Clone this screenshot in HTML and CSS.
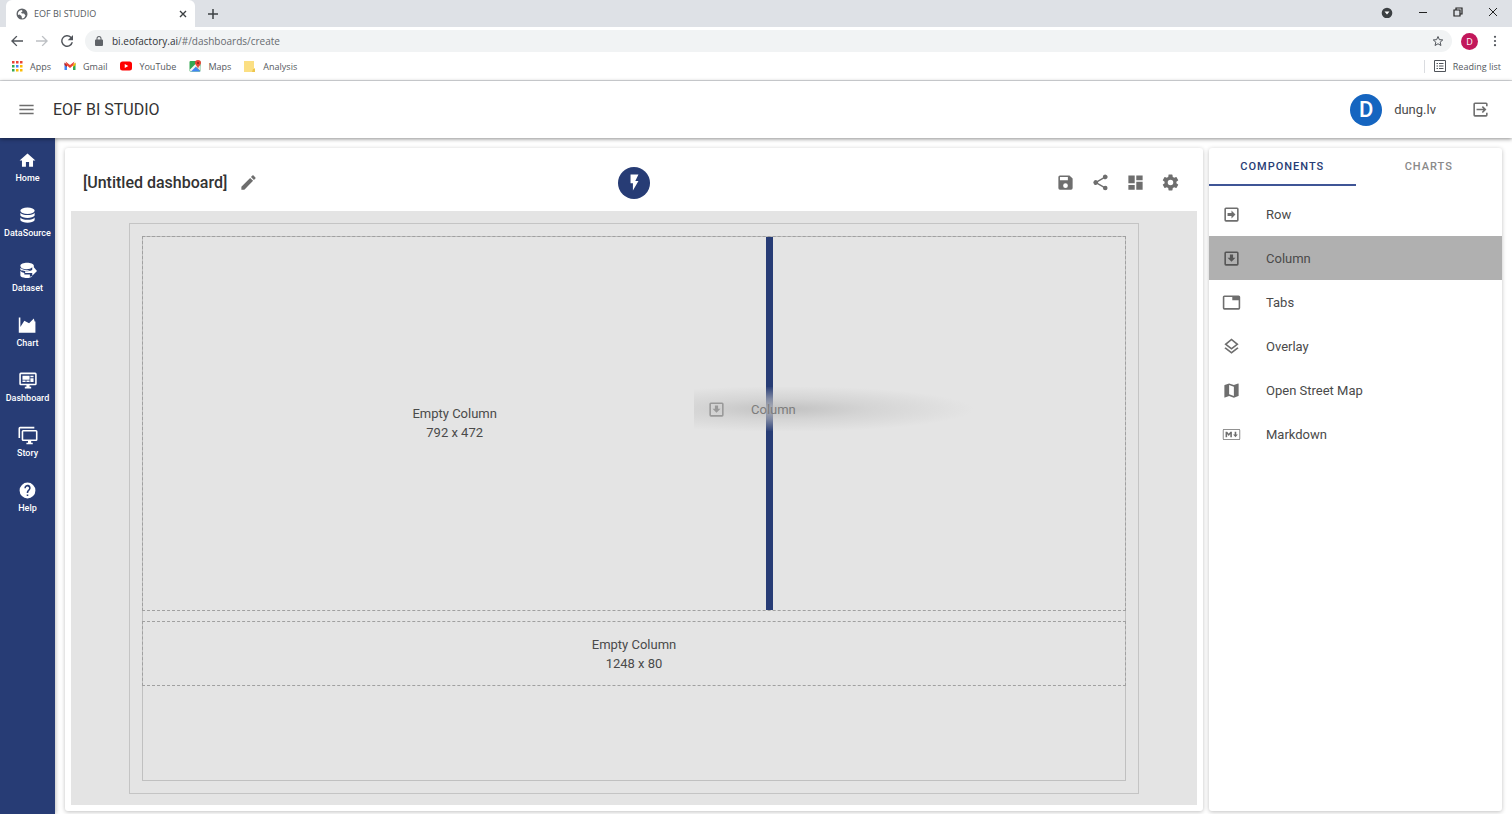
FILE: index.html
```html
<!DOCTYPE html>
<html lang="en">
<head>
<meta charset="utf-8">
<title>EOF BI STUDIO</title>
<link rel="stylesheet" href="styles.css">
</head>
<body>
<div class="browser">
  <div class="tabstrip">
    <div class="tab">
      <svg class="i12" viewBox="0 0 24 24" fill="#5f6368"><path d="M12 1a11 11 0 1 0 0 22 11 11 0 0 0 0-22zM4 14c-1-4 1-8 4-9l4-1 1 3-3 2 2 2h4l3 4-3 5-4 1-1-5-4-3z" fill-rule="evenodd"/></svg>
      <span class="tab-name">EOF BI STUDIO</span>
      <button class="plain" aria-label="Close tab"><svg class="i8" viewBox="0 0 8 8" stroke="#3c4043" stroke-width="1.4"><path d="M1 1l6 6M7 1L1 7"/></svg></button>
    </div>
    <button class="plain newtab" aria-label="New tab"><svg class="i12" viewBox="0 0 12 12" stroke="#3c4043" stroke-width="1.5"><path d="M6 1v10M1 6h10"/></svg></button>
    <div class="window-buttons">
      <button class="plain" aria-label="Search tabs"><svg class="i12" viewBox="0 0 12 12"><circle cx="6" cy="7" r="5.300" fill="#3c4043"/><path d="M3.500 5.500h5L6 8.500z" fill="#fff"/></svg></button>
      <button class="plain" aria-label="Minimize"><svg class="i10" viewBox="0 0 10 10" stroke="#222"><path d="M1 5.500h8"/></svg></button>
      <button class="plain" aria-label="Restore"><svg class="i10" viewBox="0 0 10 10" stroke="#222" stroke-width="1.200" fill="none"><path d="M1 3h6v6H1zM3 3V1h6v6H7"/></svg></button>
      <button class="plain" aria-label="Close window"><svg class="i10" viewBox="0 0 10 10" stroke="#222"><path d="M1 1l8 8M9 1L1 9"/></svg></button>
    </div>
  </div>
  <div class="toolbar">
    <div class="nav">
      <button class="plain" aria-label="Back"><svg class="i16" viewBox="0 0 24 24" fill="#50545a"><path d="M21 11H7l5.600-5.600L11 4l-8 8 8 8 1.500-1.400L7 13h14z"/></svg></button>
      <button class="plain" aria-label="Forward"><svg class="i16" viewBox="0 0 24 24" fill="#bdc0c4"><path d="M3 11h14l-5.600-5.600L13 4l8 8-8 8-1.500-1.400L17 13H3z"/></svg></button>
      <button class="plain" aria-label="Reload"><svg class="i16" viewBox="0 0 24 24" fill="#50545a"><path d="M18.500 5.500A9 9 0 1 0 21 14h-2.400a6.800 6.800 0 1 1-1.700-6.900L13 11h8V3z"/></svg></button>
    </div>
    <div class="address">
      <svg class="i12" viewBox="0 0 24 24" fill="#5f6368"><path d="M18 9h-1V7A5 5 0 0 0 7 7v2H6a2 2 0 0 0-2 2v9a2 2 0 0 0 2 2h12a2 2 0 0 0 2-2v-9a2 2 0 0 0-2-2zM9 9V7a3 3 0 0 1 6 0v2z"/></svg>
      <span class="url">bi.eofactory.ai<span class="url-path">/#/dashboards/create</span></span>
      <button class="plain star" aria-label="Bookmark"><svg class="i12" viewBox="0 0 24 24" fill="none" stroke="#50545a" stroke-width="2"><path d="M12 3l2.700 6.300 6.800.600-5.200 4.500 1.600 6.600-5.900-3.500L6.100 21l1.600-6.600L2.500 9.900l6.800-.600z"/></svg></button>
    </div>
    <button class="plain profile">D</button>
    <button class="plain kebab" aria-label="Browser menu"><svg class="i12" viewBox="0 0 12 12" fill="#50545a"><circle cx="6" cy="1.800" r="1.100"/><circle cx="6" cy="6" r="1.100"/><circle cx="6" cy="10.200" r="1.100"/></svg></button>
  </div>
  <div class="bookmarks">
    <a href="#"><svg class="i12" viewBox="0 0 12 12"><path d="M1 1h2.500v2.500H1zM5 1h2.500v2.500H5zM9 1h2.500v2.500H9z" fill="#ea4335"/><path d="M1 5h2.500v2.500H1zM1 9h2.500v2.500H1z" fill="#34a853"/><path d="M5 5h2.500v2.500H5z" fill="#4285f4"/><path d="M9 5h2.500v2.500H9zM5 9h2.500v2.500H5zM9 9h2.500v2.500H9z" fill="#fbbc05"/></svg>Apps</a>
    <a href="#"><svg class="i12" viewBox="0 0 24 24"><path d="M1 6v14h5V11z" fill="#4285f4"/><path d="M18 11v9h5V6z" fill="#34a853"/><path d="M1 5l5 4v5l-5-4z" fill="#c5221f"/><path d="M18 9l5-4v5l-5 4z" fill="#fbbc04"/><path d="M3 3l9 7 9-7-3 8-6 5-6-5z" fill="#ea4335"/></svg>Gmail</a>
    <a href="#"><svg class="i12" viewBox="0 0 24 24"><rect y="3" width="24" height="18" rx="5" fill="#f00"/><path d="M9.500 8v8l7-4z" fill="#fff"/></svg>YouTube</a>
    <a href="#"><svg class="i12" viewBox="0 0 24 24"><rect x="1" y="2" width="22" height="21" rx="2" fill="#34a853"/><path d="M3 23l10-10 10 10z" fill="#4285f4"/><path d="M1 20L18 3l3 3L4 23z" fill="#f5f5f5"/><path d="M13 13l10 9V13l-4-5z" fill="#dfe3e6"/><path d="M18 0a6 6 0 0 0-6 6c0 4 5 6 6 11 1-5 6-7 6-11a6 6 0 0 0-6-6z" fill="#ea4335"/><circle cx="18" cy="6" r="2" fill="#8c1d18"/></svg>Maps</a>
    <a href="#"><svg class="i12" viewBox="0 0 12 12"><path d="M0 1h10v7h1v4H0z" fill="#fbdf83"/><path d="M9 9h2v3H8z" fill="#edc64e"/></svg>Analysis</a>
    <a href="#" class="reading"><svg class="i12" viewBox="0 0 12 12" fill="none" stroke="#50545a"><path d="M.500.500h11v11H.500zM2.500 3.500h1.500M5 3.500h4.500M2.500 6h1.500M5 6h4.500M2.500 8.500h1.500M5 8.500h4.500"/></svg>Reading list</a>
  </div>
</div>

<header class="appbar">
  <button class="plain" aria-label="Menu"><svg class="icon" viewBox="0 0 24 24"><path d="M3 6h18v2H3zM3 11h18v2H3zM3 16h18v2H3z"/></svg></button>
  <h1>EOF BI STUDIO</h1>
  <span class="avatar">D</span>
  <span class="user">dung.lv</span>
  <button class="plain" aria-label="Log out"><svg class="icon" viewBox="0 0 24 24"><path d="M21 8V5a2 2 0 0 0-2-2H5a2 2 0 0 0-2 2v14a2 2 0 0 0 2 2h14a2 2 0 0 0 2-2v-3h-2v3H5V5h14v3zM15 7.500L13.600 9l2 2H7v2h8.600l-2 2 1.400 1.500 4.500-4.500z"/></svg></button>
</header>

<div class="app">
  <nav class="sidebar">
    <a href="#"><svg class="icon" viewBox="0 0 24 24"><path d="M10 20v-6h4v6h5v-8h3L12 3 2 12h3v8z"/></svg>Home</a>
    <a href="#"><svg class="icon" viewBox="0 0 24 24"><ellipse cx="12" cy="6" rx="9" ry="4"/><path d="M3 8.500c2 4 16 4 18 0V12c-2 4-16 4-18 0zM3 14.500c2 4 16 4 18 0V18c-2 4-16 4-18 0z"/></svg>DataSource</a>
    <a href="#"><svg class="icon" viewBox="0 0 24 24"><path d="M3 6c0-5 17-5 17 0v2l4 4.500-6 6V15H9v-2c4 0 8-.500 9-2V8c-3 4-15 3-15-2zM3 8.500c2 3 9 3.500 13 2.500-4 2-11 2-13 0zM3 12c1 2 3 2.500 5 3v2h7v3l3-1c-2 4-15 3-15-1z"/></svg>Dataset</a>
    <a href="#"><svg class="icon" viewBox="0 0 24 24"><path d="M1 2h2v12l5-8 6 3 6-6 1 4h1v14H1z"/></svg>Chart</a>
    <a href="#"><svg class="icon wide" viewBox="0 0 24 24"><path d="M21 16V4H3v12zm0-14a2 2 0 0 1 2 2v12a2 2 0 0 1-2 2h-7v2h2v2H8v-2h2v-2H3a2 2 0 0 1-2-2V4a2 2 0 0 1 2-2zM5 6h9v5H5zm10 0h4v2h-4zm4 3v5h-4V9zM5 12h4v2H5zm5 0h4v2h-4z"/></svg>Dashboard</a>
    <a href="#"><svg class="icon wide" viewBox="0 0 24 24"><path d="M22 17V7H6v10zm0-12a2 2 0 0 1 2 2v10a2 2 0 0 1-2 2h-6v2h2v2h-8v-2h2v-2H6a2 2 0 0 1-2-2V7a2 2 0 0 1 2-2zM2 3v12H0V3a2 2 0 0 1 2-2h18v2z"/></svg>Story</a>
    <a href="#"><svg class="icon" viewBox="0 0 24 24"><path d="M15.070 11.250l-.900.920C13.450 12.890 13 13.500 13 15h-2v-.500c0-1.110.450-2.110 1.170-2.830l1.240-1.260A2 2 0 1 0 10 9H8a4 4 0 1 1 7.070 2.250M13 19h-2v-2h2M12 2a10 10 0 1 0 0 20 10 10 0 0 0 0-20z"/></svg>Help</a>
  </nav>

  <main class="editor card">
    <div class="editor-bar">
      <div class="name"><h2>[Untitled dashboard]</h2>
        <button class="plain" aria-label="Rename"><svg class="icon" viewBox="0 0 24 24"><path d="M20.710 7.040c.390-.390.390-1.040 0-1.410l-2.340-2.340c-.370-.390-1.020-.390-1.410 0l-1.840 1.830 3.750 3.750M3 17.250V21h3.750L17.810 9.930l-3.750-3.750z"/></svg></button></div>
      <button class="plain flash" aria-label="Run"><svg class="icon" viewBox="0 0 24 24"><path d="M7 2v11h3v9l7-12h-4l4-8z"/></svg></button>
      <div class="actions">
        <button class="plain" aria-label="Save"><svg class="icon" viewBox="0 0 24 24"><path d="M15 9H5V5h10M12 19a3 3 0 1 1 0-6 3 3 0 0 1 0 6M17 3H5a2 2 0 0 0-2 2v14a2 2 0 0 0 2 2h14a2 2 0 0 0 2-2V7z"/></svg></button>
        <button class="plain" aria-label="Share"><svg class="icon" viewBox="0 0 24 24"><path d="M18 16.080c-.760 0-1.440.300-1.960.770L8.910 12.700c.050-.230.090-.460.090-.700s-.040-.470-.090-.700l7.050-4.110A3 3 0 1 0 15 5c0 .240.040.470.090.700L8.040 9.810a3 3 0 1 0 0 4.380l7.120 4.160c-.050.210-.080.430-.080.650a2.920 2.920 0 1 0 2.920-2.920z"/></svg></button>
        <button class="plain" aria-label="Layout"><svg class="icon" viewBox="0 0 24 24"><path d="M13 3v6h8V3M13 21h8V11h-8M3 21h8v-6H3M3 13h8V3H3z"/></svg></button>
        <button class="plain" aria-label="Settings"><svg class="icon" viewBox="0 0 24 24"><path d="M12 15.500a3.500 3.500 0 1 1 0-7 3.500 3.500 0 0 1 0 7m7.430-2.530c.040-.320.070-.640.070-.970s-.030-.660-.070-1l2.110-1.630c.190-.150.240-.420.120-.640l-2-3.460c-.120-.220-.390-.310-.610-.220l-2.490 1c-.520-.390-1.060-.730-1.690-.980l-.370-2.650A.506.506 0 0 0 14 2h-4c-.250 0-.460.180-.500.420l-.370 2.650c-.630.250-1.170.590-1.690.980l-2.490-1c-.220-.090-.490 0-.610.220l-2 3.460c-.130.220-.070.490.120.640L4.570 11c-.040.340-.070.670-.070 1s.030.650.070.970l-2.110 1.660c-.190.150-.250.420-.120.640l2 3.460c.120.220.390.300.610.220l2.490-1.010c.520.400 1.060.740 1.690.990l.370 2.650c.040.240.250.420.500.420h4c.250 0 .460-.180.500-.420l.370-2.650c.630-.260 1.170-.590 1.690-.990l2.490 1.010c.220.080.490 0 .610-.220l2-3.460c.120-.220.070-.490-.120-.640z"/></svg></button>
      </div>
    </div>
    <div class="canvas">
      <div class="page">
        <div class="page-inner">
          <section class="row split">
            <div class="cell">Empty Column<br>792 x 472</div>
            <div class="drop"></div>
            <div class="rest"></div>
            <div class="ghost"><svg class="icon" viewBox="0 0 24 24"><path d="M19 3a2 2 0 0 1 2 2v14a2 2 0 0 1-2 2H5a2 2 0 0 1-2-2V5a2 2 0 0 1 2-2zm0 16V5H5v14zM10 7h4v4h3l-5 5-5-5h3z"/></svg>Column</div>
          </section>
          <section class="row single">
            <div class="cell">Empty Column<br>1248 x 80</div>
          </section>
        </div>
      </div>
    </div>
  </main>

  <aside class="panel card">
    <div class="panel-tabs">
      <button class="plain active">COMPONENTS</button>
      <button class="plain">CHARTS</button>
    </div>
    <ul class="components">
      <li><svg class="icon" viewBox="0 0 24 24"><path d="M19 3a2 2 0 0 1 2 2v14a2 2 0 0 1-2 2H5a2 2 0 0 1-2-2V5a2 2 0 0 1 2-2zm0 16V5H5v14zM7 10h5V7l5 5-5 5v-3H7z"/></svg>Row</li>
      <li class="dragging"><svg class="icon" viewBox="0 0 24 24"><path d="M19 3a2 2 0 0 1 2 2v14a2 2 0 0 1-2 2H5a2 2 0 0 1-2-2V5a2 2 0 0 1 2-2zm0 16V5H5v14zM10 7h4v4h3l-5 5-5-5h3z"/></svg>Column</li>
      <li><svg class="icon" viewBox="0 0 24 24"><path d="M21 3H3a2 2 0 0 0-2 2v14a2 2 0 0 0 2 2h18a2 2 0 0 0 2-2V5a2 2 0 0 0-2-2m0 16H3V5h10v4h8z"/></svg>Tabs</li>
      <li><svg class="icon" viewBox="0 0 24 24"><path d="M12 18.540l7.370-5.740L21 14.070l-9 7-9-7 1.620-1.260zM12 16L3 9l9-7 9 7zm0-11.470L6.260 9 12 13.470 17.740 9z"/></svg>Overlay</li>
      <li><svg class="icon" viewBox="0 0 24 24"><path d="M15 19l-6-2.110V5l6 2.110M20.500 3h-.160L15 5.100 9 3 3.360 4.900c-.210.070-.360.250-.360.480V20.500a.500.500 0 0 0 .500.500l.160-.030L9 18.900l6 2.100 5.640-1.900c.210-.100.360-.250.360-.480V3.500a.500.500 0 0 0-.500-.500z"/></svg>Open Street Map</li>
      <li><svg class="icon" viewBox="0 0 24 24"><path d="M2.500 5h19A1.500 1.500 0 0 1 23 6.500v11a1.500 1.500 0 0 1-1.500 1.500h-19A1.500 1.500 0 0 1 1 17.500v-11A1.500 1.500 0 0 1 2.500 5zM2 6v12h20V6zM4.500 15.500v-7h2L8.500 11l2-2.500h2v7h-2v-4l-2 2.500-2-2.500v4zM16 8.500h2V12h2l-3 3.500-3-3.500h2z"/></svg>Markdown</li>
    </ul>
  </aside>
</div>
</body>
</html>
```

FILE: styles.css
```css
* { box-sizing: border-box; }

body {
  margin: 0;
  min-height: 100vh;
  display: flex;
  flex-direction: column;
  font-family: Roboto, "Liberation Sans", sans-serif;
  font-size: 13px;
  color: #4a4a4a;
  background: #fff;
}

svg { display: block; flex: none; }
h1, h2 { margin: 0; }
a { color: inherit; text-decoration: none; }

.plain {
  display: flex;
  align-items: center;
  justify-content: center;
  padding: 0;
  border: 0;
  background: none;
  font: inherit;
  color: inherit;
}

.i8 { width: 8px; height: 8px; }
.i10 { width: 10px; height: 10px; }
.i12 { width: 12px; height: 12px; }
.i16 { width: 16px; height: 16px; }

.icon {
  width: 19px;
  height: 19px;
  fill: #6e6e6e;
  fill-rule: evenodd;
}

/* Browser frame */
.browser {
  font-family: "Open Sans", "Noto Sans", sans-serif;
  font-size: 10px;
  color: #55595e;
  border-bottom: 1px solid #dcdee1;
}

.tabstrip {
  display: flex;
  align-items: center;
  height: 27px;
  padding-left: 6px;
  background: #dee1e6;
}

.tab {
  display: flex;
  align-items: center;
  gap: 6px;
  width: 189px;
  height: 27px;
  padding: 0 8px 0 10px;
  border-radius: 6px 6px 0 0;
  background: #fff;
}

.tab-name { flex: 1; font-size: 9px; }
.newtab { margin-left: 12px; }

.window-buttons {
  display: flex;
  gap: 25px;
  align-self: flex-start;
  align-items: center;
  height: 24px;
  margin-left: auto;
  padding-right: 14px;
}

.toolbar {
  display: flex;
  align-items: center;
  height: 28px;
  padding: 0 11px 0 9px;
}

.nav { display: flex; gap: 9px; }

.address {
  flex: 1;
  display: flex;
  align-items: center;
  gap: 7px;
  height: 22px;
  margin-left: 10px;
  padding: 0 8px;
  border-radius: 11px;
  background: #f1f3f4;
}

.url { color: #303236; }
.url-path { color: #676b70; }
.star { margin-left: auto; }

.profile {
  width: 17px;
  height: 17px;
  margin-left: 9px;
  border-radius: 50%;
  background: #c2185b;
  color: #fff;
  font-size: 9px;
}

.kebab { margin-left: 11px; }

.bookmarks {
  display: flex;
  align-items: center;
  gap: 13px;
  height: 25px;
  padding: 0 11px 3px;
  font-size: 9px;
}

.bookmarks a { display: flex; align-items: center; gap: 7px; }

.bookmarks .reading {
  margin-left: auto;
  padding-left: 9px;
  border-left: 1px solid #dadce0;
}

/* Application header */
.appbar {
  position: relative;
  z-index: 1;
  display: flex;
  align-items: center;
  height: 57px;
  padding: 0 22px 0 17px;
  background: #fff;
  box-shadow: 0 1px 4px rgba(0, 0, 0, .45);
}

.appbar h1 {
  flex: 1;
  margin-left: 17px;
  font-size: 16px;
  font-weight: 400;
  color: #333;
}

.avatar {
  width: 32px;
  height: 32px;
  margin-right: 12px;
  border-radius: 50%;
  background: #1565c0;
  color: #fff;
  font-size: 22px;
  font-weight: 500;
  line-height: 32px;
  text-align: center;
}

.user { margin-right: 35px; }

.app { flex: 1; display: flex; }

.sidebar {
  width: 55px;
  padding-top: 2px;
  background: #273c75;
  color: #fff;
  font-size: 9px;
  font-weight: 500;
  box-shadow: 1px 0 4px rgba(0, 0, 0, .25);
}

.sidebar a {
  display: flex;
  flex-direction: column;
  align-items: center;
  justify-content: center;
  gap: 2px;
  height: 55px;
  line-height: 12px;
}

.sidebar .icon { fill: #fff; }
.sidebar .wide { width: 20px; }

.card {
  margin-top: 10px;
  margin-bottom: 3px;
  border-radius: 3px;
  background: #fff;
  box-shadow: 0 1px 4px rgba(0, 0, 0, .25);
}

/* Dashboard editor */
.editor {
  flex: 1;
  display: flex;
  flex-direction: column;
  margin-left: 10px;
  padding: 0 6px 6px;
}

.editor-bar {
  display: grid;
  grid-template-columns: 1fr auto 1fr;
  align-items: center;
  height: 63px;
  padding: 6px 12px 0;
}

.name { display: flex; align-items: center; gap: 12px; }

.name h2 {
  font-size: 16px;
  font-weight: 500;
  color: #333;
}

.flash {
  width: 32px;
  height: 32px;
  border-radius: 50%;
  background: #273c75;
}

.flash .icon { fill: #fff; }

.actions {
  display: flex;
  justify-content: flex-end;
  gap: 16px;
  padding-right: 5px;
}

.canvas {
  flex: 1;
  display: flex;
  padding: 12px 58px 11px;
  background: #e4e4e4;
}

.page {
  flex: 1;
  display: flex;
  padding: 12px;
  border: 1px solid #c4c4c4;
}

.page-inner {
  flex: 1;
  display: flex;
  flex-direction: column;
  gap: 12px;
  border: 1px solid #c0c0c0;
}

.row {
  display: flex;
  margin: -1px;
  border: 1px dashed #a0a0a0;
}

.split { position: relative; height: 375px; }
.single { height: 65px; }

.cell {
  flex: 1;
  display: flex;
  align-items: center;
  justify-content: center;
  text-align: center;
  line-height: 19px;
}

.split .cell { flex: 624; padding-bottom: 2px; }
.drop { width: 7px; background: #273c75; }
.rest { flex: 352; }

.ghost {
  position: absolute;
  left: 551px;
  top: 150px;
  display: flex;
  align-items: center;
  gap: 25px;
  width: 293px;
  height: 44px;
  padding-left: 13px;
  color: #7c7c7c;
  background: radial-gradient(ellipse 190px 23px at 90px 22px, rgba(190, 190, 190, .9), rgba(200, 200, 200, .55) 45%, rgba(228, 228, 228, 0));
}

.ghost .icon { fill: #999; }

/* Component palette */
.panel {
  width: 293px;
  margin-left: 6px;
  margin-right: 10px;
}

.panel-tabs {
  display: grid;
  grid-template-columns: 1fr 1fr;
  height: 38px;
}

.panel-tabs button {
  border-bottom: 2px solid transparent;
  font-size: 11px;
  font-weight: 500;
  letter-spacing: 1px;
  color: #8a8a8a;
}

.panel-tabs .active { border-color: #3f5596; color: #273c75; }

.components { margin: 0; padding: 6px 0 0; list-style: none; }

.components li {
  display: flex;
  align-items: center;
  gap: 25px;
  height: 44px;
  padding-left: 13px;
}

.components .dragging { background: #b0b0b0; }
.components .dragging .icon { fill: #555; }
```
